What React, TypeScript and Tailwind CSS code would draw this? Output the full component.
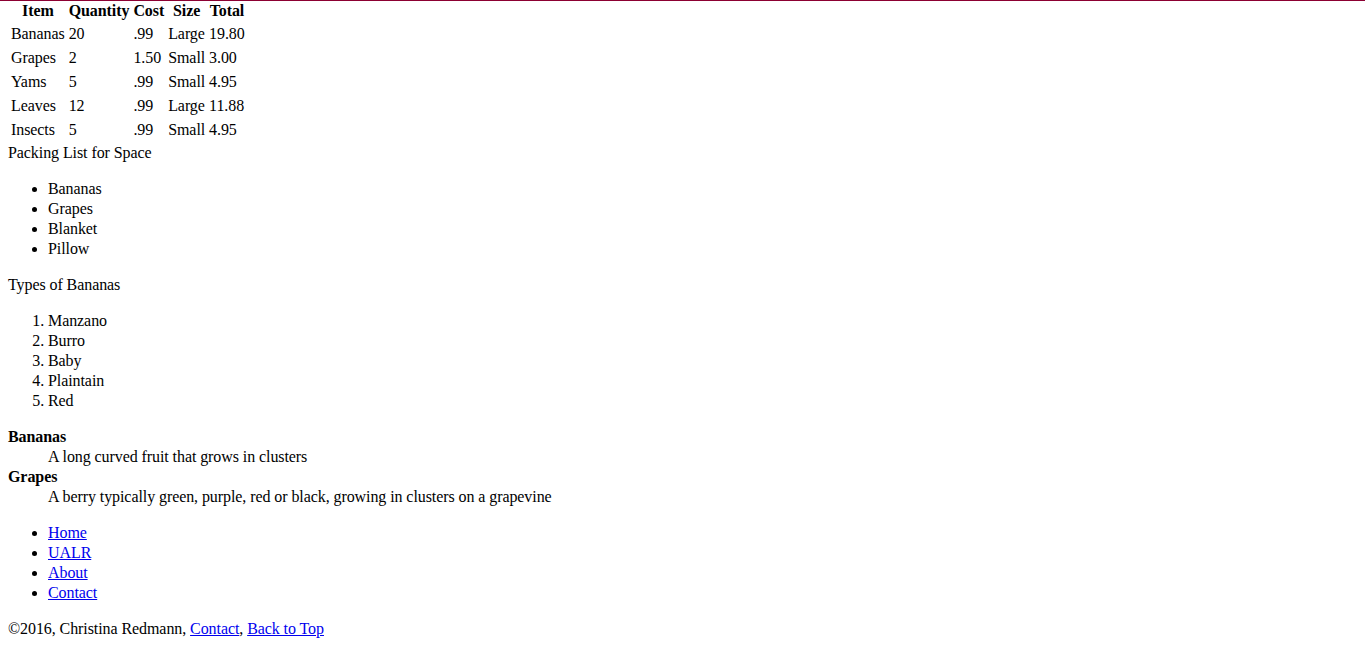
import React from "react";

const rows = [
  { item: "Bananas", qty: "20", cost: ".99", size: "Large", total: "19.80" },
  { item: "Grapes", qty: "2", cost: "1.50", size: "Small", total: "3.00" },
  { item: "Yams", qty: "5", cost: ".99", size: "Small", total: "4.95" },
  { item: "Leaves", qty: "12", cost: ".99", size: "Large", total: "11.88" },
  { item: "Insects", qty: "5", cost: ".99", size: "Small", total: "4.95" },
];

const packing = ["Bananas", "Grapes", "Blanket", "Pillow"];
const bananaTypes = ["Manzano", "Burro", "Baby", "Plaintain", "Red"];
const nav = ["Home", "UALR", "About", "Contact"];

const linkCls = "text-[#0000ee] underline";

export default function App() {
  return (
    <div className="min-h-screen bg-white border-t border-[#8c0032] text-black font-['Liberation_Serif',serif] text-[16px] leading-[20px] tracking-[-0.08px]">
      <div className="px-2 -mt-[3px]">
        <table className="border-separate border-spacing-[2px]">
          <thead>
            <tr>
              {["Item", "Quantity", "Cost", "Size", "Total"].map((h) => (
                <th key={h} className="px-px pt-px pb-0 font-bold text-center">
                  {h}
                </th>
              ))}
            </tr>
          </thead>
          <tbody>
            {rows.map((r) => (
              <tr key={r.item}>
                <td className="p-px">{r.item}</td>
                <td className="p-px">{r.qty}</td>
                <td className="p-px">{r.cost}</td>
                <td className="p-px">{r.size}</td>
                <td className="p-px">{r.total}</td>
              </tr>
            ))}
          </tbody>
        </table>
        <div>Packing List for Space</div>
        <ul className="my-4 pl-10 list-disc">
          {packing.map((p) => (
            <li key={p}>{p}</li>
          ))}
        </ul>
        <p className="my-4">Types of Bananas</p>
        <ol className="my-4 pl-10 list-decimal">
          {bananaTypes.map((b) => (
            <li key={b}>{b}</li>
          ))}
        </ol>
        <dl className="my-4">
          <dt className="font-bold">Bananas</dt>
          <dd className="ml-10">A long curved fruit that grows in clusters</dd>
          <dt className="font-bold">Grapes</dt>
          <dd className="ml-10">
            A berry typically green, purple, red or black, growing in clusters on a grapevine
          </dd>
        </dl>
        <ul className="my-4 pl-10 list-disc">
          {nav.map((n) => (
            <li key={n}>
              <a href="#" className={linkCls}>
                {n}
              </a>
            </li>
          ))}
        </ul>
        <p className="my-4">
          ©2016, Christina Redmann,{" "}
          <a href="#" className={linkCls}>
            Contact
          </a>
          ,{" "}
          <a href="#" className={linkCls}>
            Back to Top
          </a>
        </p>
      </div>
    </div>
  );
}
